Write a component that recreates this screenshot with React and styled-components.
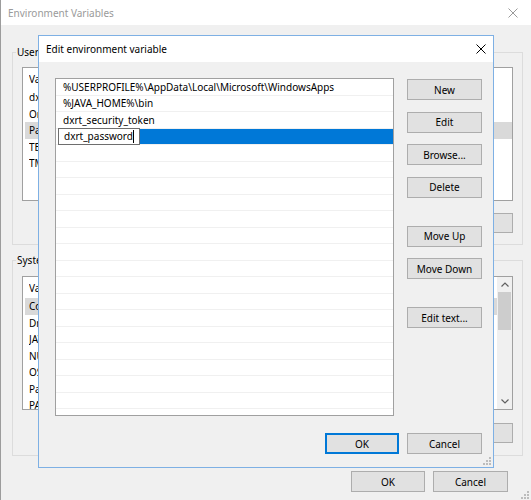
import React from "react";
import styled, { createGlobalStyle } from "styled-components";

const GlobalStyle = createGlobalStyle`
  html, body {
    margin: 0;
    padding: 0;
    background: #f0f0f0;
  }
  body {
    font-family: "Noto Sans", "Open Sans", sans-serif;
    font-size: 10px;
    color: #000;
  }
  * {
    box-sizing: border-box;
  }
`;

const Window = styled.div`
  position: relative;
  width: 531px;
  height: 500px;
  background: #f0f0f0;
  border-left: 1px solid #9c9c9c;
  display: flex;
  flex-direction: column;
  overflow: hidden;
`;

const TitleBar = styled.div`
  flex: none;
  height: ${(p) => p.$h}px;
  background: #fff;
  display: flex;
  align-items: center;
  justify-content: space-between;
  padding: 0 ${(p) => p.$pr}px 0 ${(p) => p.$pl}px;
  color: ${(p) => (p.$inactive ? "#9a9a9a" : "#000")};
`;

const Body = styled.div`
  display: flex;
  flex-direction: column;
  padding: 27px 8px 0 11px;
`;

const GroupBox = styled.div`
  height: ${(p) => p.$h}px;
  margin-top: ${(p) => p.$mt || 0}px;
  border: 1px solid #dcdcdc;
  padding: 0 9px;
  display: flex;
  flex-direction: column;
`;

const Legend = styled.span`
  align-self: flex-start;
  margin: -9px 0 0 -6px;
  padding: 0 1px;
  line-height: 16px;
  background: #f0f0f0;
  white-space: nowrap;
`;

const ListView = styled.div`
  height: 134px;
  margin-top: ${(p) => p.$mt}px;
  background: #fff;
  border: 1px solid #a0a0a0;
  display: flex;
  overflow: hidden;
`;

const ListColumn = styled.div`
  flex: 1;
  display: flex;
  flex-direction: column;
  overflow: hidden;
`;

const HeaderRow = styled.div`
  flex: none;
  height: 21px;
  display: flex;
  align-items: center;
  padding-left: 6px;
`;

const ListRow = styled.div`
  flex: none;
  height: 16.5px;
  display: flex;
  align-items: center;
  padding-left: 4px;
  margin-left: 2px;
  background: ${(p) => (p.$selected ? "#d9d9d9" : "transparent")};
  white-space: nowrap;
`;

const Cell = styled.span`
  width: ${(p) => p.$w}px;
  flex: none;
  overflow: hidden;
`;

const Scrollbar = styled.div`
  width: 15px;
  flex: none;
  background: #f0f0f0;
  display: flex;
  flex-direction: column;
  align-items: center;
`;

const ArrowCell = styled.div`
  height: 15px;
  width: 100%;
  display: flex;
  align-items: center;
  justify-content: center;
`;

const Thumb = styled.div`
  width: 13px;
  height: 38px;
  background: #cdcdcd;
`;

const ButtonRow = styled.div`
  display: flex;
  justify-content: flex-end;
  gap: 8px;
  margin-top: ${(p) => p.$mt}px;
  padding-right: ${(p) => p.$pr || 0}px;
`;

const Button = styled.div`
  width: ${(p) => p.$w || 75}px;
  height: ${(p) => p.$h || 21}px;
  flex: none;
  display: flex;
  align-items: center;
  justify-content: center;
  background: #e1e1e1;
  border: 1px solid ${(p) => (p.$default ? "#0078d7" : "#adadad")};
  box-shadow: ${(p) => (p.$default ? "inset 0 0 0 1px #0078d7" : "none")};
  white-space: nowrap;
`;

const Dialog = styled.div`
  position: absolute;
  left: 37px;
  top: 35px;
  width: 456px;
  height: 433px;
  background: #f0f0f0;
  border: 1px solid #7eb0e4;
  display: flex;
  flex-direction: column;
`;

const DialogBody = styled.div`
  display: flex;
  gap: 13px;
  padding: 16px 11px 0 16px;
`;

const EditList = styled.div`
  width: 339px;
  height: 338px;
  flex: none;
  background: #fff;
  border: 1px solid #a0a0a0;
  display: flex;
  flex-direction: column;
  overflow: hidden;
`;

const EditRow = styled.div`
  flex: none;
  height: 16.5px;
  display: flex;
  align-items: center;
  padding-left: ${(p) => (p.$editing ? 2 : 7)}px;
  border-bottom: 1px solid #f0f0f0;
  white-space: nowrap;
`;

const Editor = styled.div`
  width: 82px;
  height: 17px;
  flex: none;
  display: flex;
  align-items: center;
  padding-left: 5px;
  background: #fff;
  border: 1px solid #6e6e6e;
`;

const Caret = styled.span`
  width: 1px;
  height: 13px;
  background: #000;
`;

const SelectionFill = styled.div`
  flex: 1;
  align-self: stretch;
  background: #0078d7;
`;

const ButtonColumn = styled.div`
  width: 75px;
  flex: none;
  display: flex;
  flex-direction: column;
  gap: 11.5px;
  padding-top: 1px;
`;

const Spacer = styled.div`
  height: 5px;
  flex: none;
`;

const Grip = styled.svg`
  position: absolute;
  right: ${(p) => p.$r}px;
  bottom: ${(p) => p.$b}px;
`;

const CloseIcon = ({ color }) => (
  <svg width="10" height="10" viewBox="0 0 10 10">
    <path d="M0.5 0.5 L9.5 9.5 M9.5 0.5 L0.5 9.5" stroke={color} strokeWidth="1" fill="none" />
  </svg>
);

const Chevron = ({ up }) => (
  <svg width="8" height="5" viewBox="0 0 8 5">
    <path
      d={up ? "M0.5 4.5 L4 1 L7.5 4.5" : "M0.5 0.5 L4 4 L7.5 0.5"}
      stroke="#606060"
      strokeWidth="1.2"
      fill="none"
    />
  </svg>
);

const ResizeGrip = ({ r, b }) => (
  <Grip $r={r} $b={b} width="8" height="8" viewBox="0 0 8 8">
    {[
      [6, 0],
      [6, 3],
      [3, 3],
      [6, 6],
      [3, 6],
      [0, 6],
    ].map(([x, y]) => (
      <rect key={`${x}-${y}`} x={x} y={y} width="2" height="2" fill="#bcbcbc" />
    ))}
  </Grip>
);

const userVars = [
  ["dxrt_security_token", "xxxxxxxx"],
  ["OneDrive", "C:\\Users\\dxrt\\OneDrive"],
  ["Path", "C:\\Users\\dxrt\\AppData\\Local\\Microsoft\\WindowsApps;..."],
  ["TEMP", "%USERPROFILE%\\AppData\\Local\\Temp"],
  ["TMP", "%USERPROFILE%\\AppData\\Local\\Temp"],
];

const systemVars = [
  ["ComSpec", "C:\\Windows\\system32\\cmd.exe"],
  ["DriverData", "C:\\Windows\\System32\\Drivers\\DriverData"],
  ["JAVA_HOME", "C:\\Program Files\\Java\\jdk1.8.0"],
  ["NUMBER_OF_PROCESSORS", "4"],
  ["OS", "Windows_NT"],
  ["Path", "C:\\Windows\\system32;C:\\Windows;..."],
  ["PATHEXT", ".COM;.EXE;.BAT;.CMD;.VBS;.VBE;.JS"],
];

const pathEntries = [
  "%USERPROFILE%\\AppData\\Local\\Microsoft\\WindowsApps",
  "%JAVA_HOME%\\bin",
  "dxrt_security_token",
];

const VarList = ({ rows, selected, mt, scroll }) => (
  <ListView $mt={mt}>
    <ListColumn>
      <HeaderRow>
        <Cell $w={150}>Variable</Cell>
        <Cell $w={300}>Value</Cell>
      </HeaderRow>
      {rows.map(([name, value]) => (
        <ListRow key={name} $selected={name === selected}>
          <Cell $w={148}>{name}</Cell>
          <Cell $w={300}>{value}</Cell>
        </ListRow>
      ))}
    </ListColumn>
    {scroll && (
      <Scrollbar>
        <ArrowCell>
          <Chevron up />
        </ArrowCell>
        <Thumb />
        <div style={{ flex: 1 }} />
        <ArrowCell>
          <Chevron />
        </ArrowCell>
      </Scrollbar>
    )}
  </ListView>
);

const App = () => {
  return (
    <>
      <GlobalStyle />
      <Window>
        <TitleBar $h={25} $pl={7} $pr={13} $inactive>
          <span>Environment Variables</span>
          <CloseIcon color="#9a9a9a" />
        </TitleBar>
        <Body>
          <GroupBox $h={193}>
            <Legend>User variables for dxrt</Legend>
            <VarList rows={userVars} selected="Path" mt={7} />
            <ButtonRow $mt={12}>
              <Button $h={20}>New...</Button>
              <Button $h={20}>Edit...</Button>
              <Button $h={20}>Delete</Button>
            </ButtonRow>
          </GroupBox>
          <GroupBox $h={196} $mt={15}>
            <Legend>System variables</Legend>
            <VarList rows={systemVars} selected="ComSpec" mt={8} scroll />
            <ButtonRow $mt={13}>
              <Button $h={20}>New...</Button>
              <Button $h={20}>Edit...</Button>
              <Button $h={20}>Delete</Button>
            </ButtonRow>
          </GroupBox>
          <ButtonRow $mt={15} $pr={15}>
            <Button $w={74}>OK</Button>
            <Button>Cancel</Button>
          </ButtonRow>
        </Body>
        <ResizeGrip r={2} b={1} />

        <Dialog>
          <TitleBar $h={26} $pl={7} $pr={7}>
            <span>Edit environment variable</span>
            <CloseIcon color="#000" />
          </TitleBar>
          <DialogBody>
            <EditList>
              {pathEntries.map((entry) => (
                <EditRow key={entry}>{entry}</EditRow>
              ))}
              <EditRow $editing>
                <Editor>
                  dxrt_password
                  <Caret />
                </Editor>
                <SelectionFill />
              </EditRow>
              {Array.from({ length: 18 }, (_, i) => (
                <EditRow key={i} />
              ))}
            </EditList>
            <ButtonColumn>
              <Button>New</Button>
              <Button>Edit</Button>
              <Button>Browse...</Button>
              <Button>Delete</Button>
              <Spacer />
              <Button>Move Up</Button>
              <Button>Move Down</Button>
              <Spacer />
              <Button>Edit text...</Button>
            </ButtonColumn>
          </DialogBody>
          <ButtonRow $mt={17} $pr={11}>
            <Button $w={74} $default>
              OK
            </Button>
            <Button>Cancel</Button>
          </ButtonRow>
          <ResizeGrip r={2} b={2} />
        </Dialog>
      </Window>
    </>
  );
};

export default App;
